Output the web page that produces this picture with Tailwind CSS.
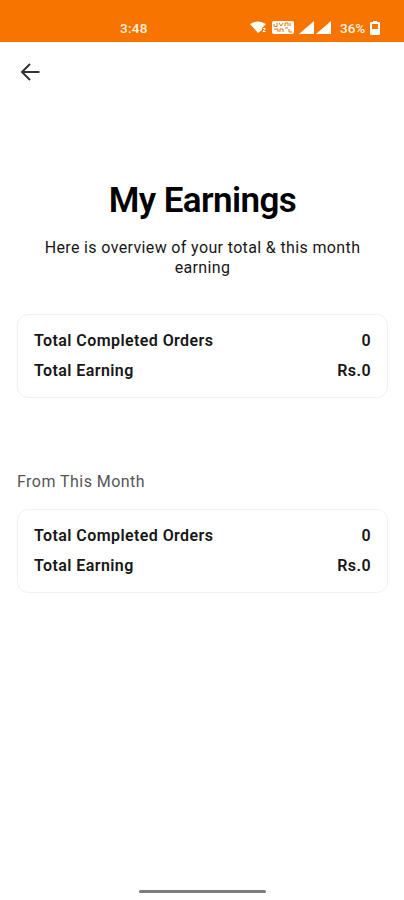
<!DOCTYPE html>
<html lang="en"><head><meta charset="utf-8"><title>My Earnings</title><script src="https://cdn.jsdelivr.net/npm/@tailwindcss/browser@4"></script></head>
<body class="flex h-[900px] w-[404px] flex-col overflow-hidden bg-white font-['Roboto',sans-serif] text-[#171717]">
<header class="flex h-[42px] shrink-0 items-center bg-[#f77400] pt-[14px] pl-[120px] text-[13.5px] font-medium text-[#fff1dc]">
<span class="w-[130px] tracking-[0.3px]">3:48</span>
<svg class="h-[18px] w-[84px]" viewBox="0 0 84 18" fill="white"><path d="M0 5Q8 0 16 5L12 9V11L8 14Z"/><path d="M13 9.500h2.500M15 10l-2 2.500h2.500" fill="none" stroke="white"/><rect x="22" y="2" width="22" height="13" rx="2"/><path d="M24 5v2.500h3V4M29 4l2 3 2-3M35 7V4h3v3M24 10h4v3M30 13v-3h3v3M35 9h3M40 4v3M39 10v3h3" fill="none" stroke="#f77400" stroke-width="1"/><path d="M64 2v13H49zM81 2v13H66z"/></svg>
<span class="ml-[6px] w-[30px] tracking-normal whitespace-nowrap">36%</span>
<svg class="h-[16px] w-[10px]" viewBox="0 0 10 16"><path d="M3 1h4v1h2q1 0 1 1v11q0 1-1 1H1q-1 0-1-1V3q0-1 1-1h2z" fill="white"/><path d="M2 4h6v5H2z" fill="#f77400"/></svg>
</header>
<nav class="flex h-[60px] shrink-0 items-center pl-5"><svg class="h-5 w-5" viewBox="0 0 20 20" fill="none" stroke="#333" stroke-width="2"><path d="M19.500 10H2M10 2L2 10L10 18"/></svg></nav>
<main class="flex flex-col pt-[79px] pr-4 pl-[17px]">
<h1 class="text-center text-[35px] leading-10 font-semibold tracking-[-0.6px] text-black">My Earnings</h1>
<p class="mt-[17px] text-center text-base leading-5 tracking-[0.36px]">Here is overview of your total &amp; this month<br>earning</p>
<section class="mt-[36px] flex h-[84px] flex-col justify-center rounded-[11px] border border-[#f1f1f1] px-4 text-base leading-[30px] font-semibold tracking-[0.42px]"><div class="flex justify-between"><span>Total Completed Orders</span><span>0</span></div><div class="flex justify-between"><span>Total Earning</span><span>Rs.0</span></div></section>
<h2 class="mt-[74px] text-base leading-5 tracking-[0.46px] text-[#555]">From This Month</h2>
<section class="mt-[17px] flex h-[84px] flex-col justify-center rounded-[11px] border border-[#f1f1f1] px-4 text-base leading-[30px] font-semibold tracking-[0.42px]"><div class="flex justify-between"><span>Total Completed Orders</span><span>0</span></div><div class="flex justify-between"><span>Total Earning</span><span>Rs.0</span></div></section>
</main>
<div class="mx-auto mt-auto mb-[7px] h-[3px] w-[127px] rounded-full bg-[#7c7e7c]"></div>
</body></html>
